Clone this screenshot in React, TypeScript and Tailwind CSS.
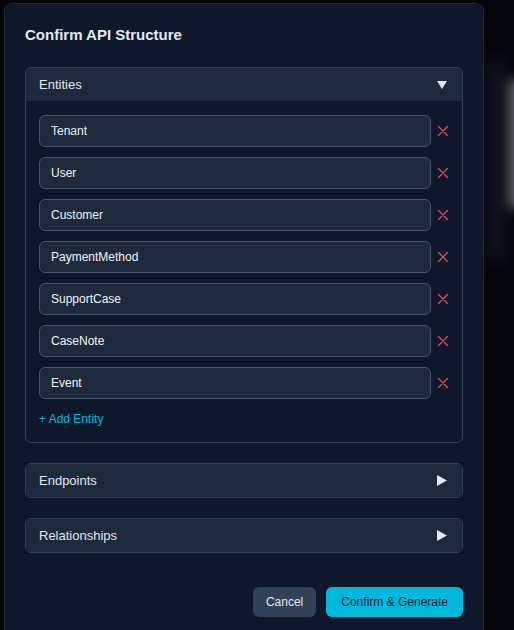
import React from 'react';

const entities = ['Tenant', 'User', 'Customer', 'PaymentMethod', 'SupportCase', 'CaseNote', 'Event'];

const font = { fontFamily: '"Liberation Sans", Arial, sans-serif' };

const TriangleDown = () => (
  <svg width="10" height="8" viewBox="0 0 10 8" className="block">
    <polygon points="0,0 10,0 5,8" fill="#e2e8f0" />
  </svg>
);

const TriangleRight = () => (
  <svg width="10" height="11" viewBox="0 0 10 11" className="block">
    <polygon points="0,0 10,5.5 0,11" fill="#e2e8f0" />
  </svg>
);

const CrossIcon = () => (
  <svg width="10" height="10" viewBox="0 0 10 10" className="block">
    <path d="M0.5 0.5 L9.5 9.5 M9.5 0.5 L0.5 9.5" stroke="#d9505c" strokeWidth="1.3" strokeLinecap="round" />
  </svg>
);

const Section: React.FC<{ title: string; open?: boolean; children?: React.ReactNode }> = ({ title, open, children }) => (
  <div className="overflow-hidden rounded-md border border-slate-700">
    <div className="flex h-[33px] items-center justify-between bg-[#1e293b] pl-[13px] pr-[15px]">
      <span className="text-[13px] text-slate-200">{title}</span>
      {open ? <TriangleDown /> : <TriangleRight />}
    </div>
    {open && children}
  </div>
);

export default function App() {
  return (
    <div className="relative min-h-screen overflow-hidden bg-[#05060a]" style={font}>
      {/* blurred page behind the backdrop */}
      <div className="absolute left-[504px] top-[80px] h-[128px] w-[40px] bg-[#5e5e5e] blur-[6px]" />
      <div className="absolute left-[486px] top-[60px] h-[200px] w-[20px] bg-[#0e1320] blur-[8px]" />

      <div className="relative pl-1 pt-[3px]">
        <div className="w-[480px] rounded-lg border border-[#1e293b] bg-[#0f172a] px-5 pb-5 pt-[21px]">
          <h2 className="text-[15px] font-bold leading-5 text-slate-200">Confirm API Structure</h2>

          <div className="mt-[22px] flex flex-col gap-5">
            <Section title="Entities" open>
              <div className="px-[13px] pb-[15px] pt-[14px]">
                <div className="flex flex-col gap-[10px]">
                  {entities.map((name) => (
                    <div key={name} className="flex items-center gap-[7px] pr-[1px]">
                      <div className="flex h-8 flex-1 items-center rounded-md border border-slate-600 bg-[#1e293b] px-[11px] text-[12px] font-medium text-slate-100">
                        {name}
                      </div>
                      <span className="flex w-[10px] justify-center">
                        <CrossIcon />
                      </span>
                    </div>
                  ))}
                </div>
                <div className="mt-3 text-[12px] leading-4 text-cyan-500">+ Add Entity</div>
              </div>
            </Section>
            <Section title="Endpoints" />
            <Section title="Relationships" />
          </div>

          <div className="mt-[34px] flex justify-end gap-[10px]">
            <button className="h-[30px] rounded-md bg-slate-700 px-[13px] text-[12px] text-slate-200">Cancel</button>
            <button className="h-[30px] rounded-md bg-cyan-500 px-[15px] text-[12px] font-medium text-slate-900">
              Confirm &amp; Generate
            </button>
          </div>
        </div>
      </div>
    </div>
  );
}
